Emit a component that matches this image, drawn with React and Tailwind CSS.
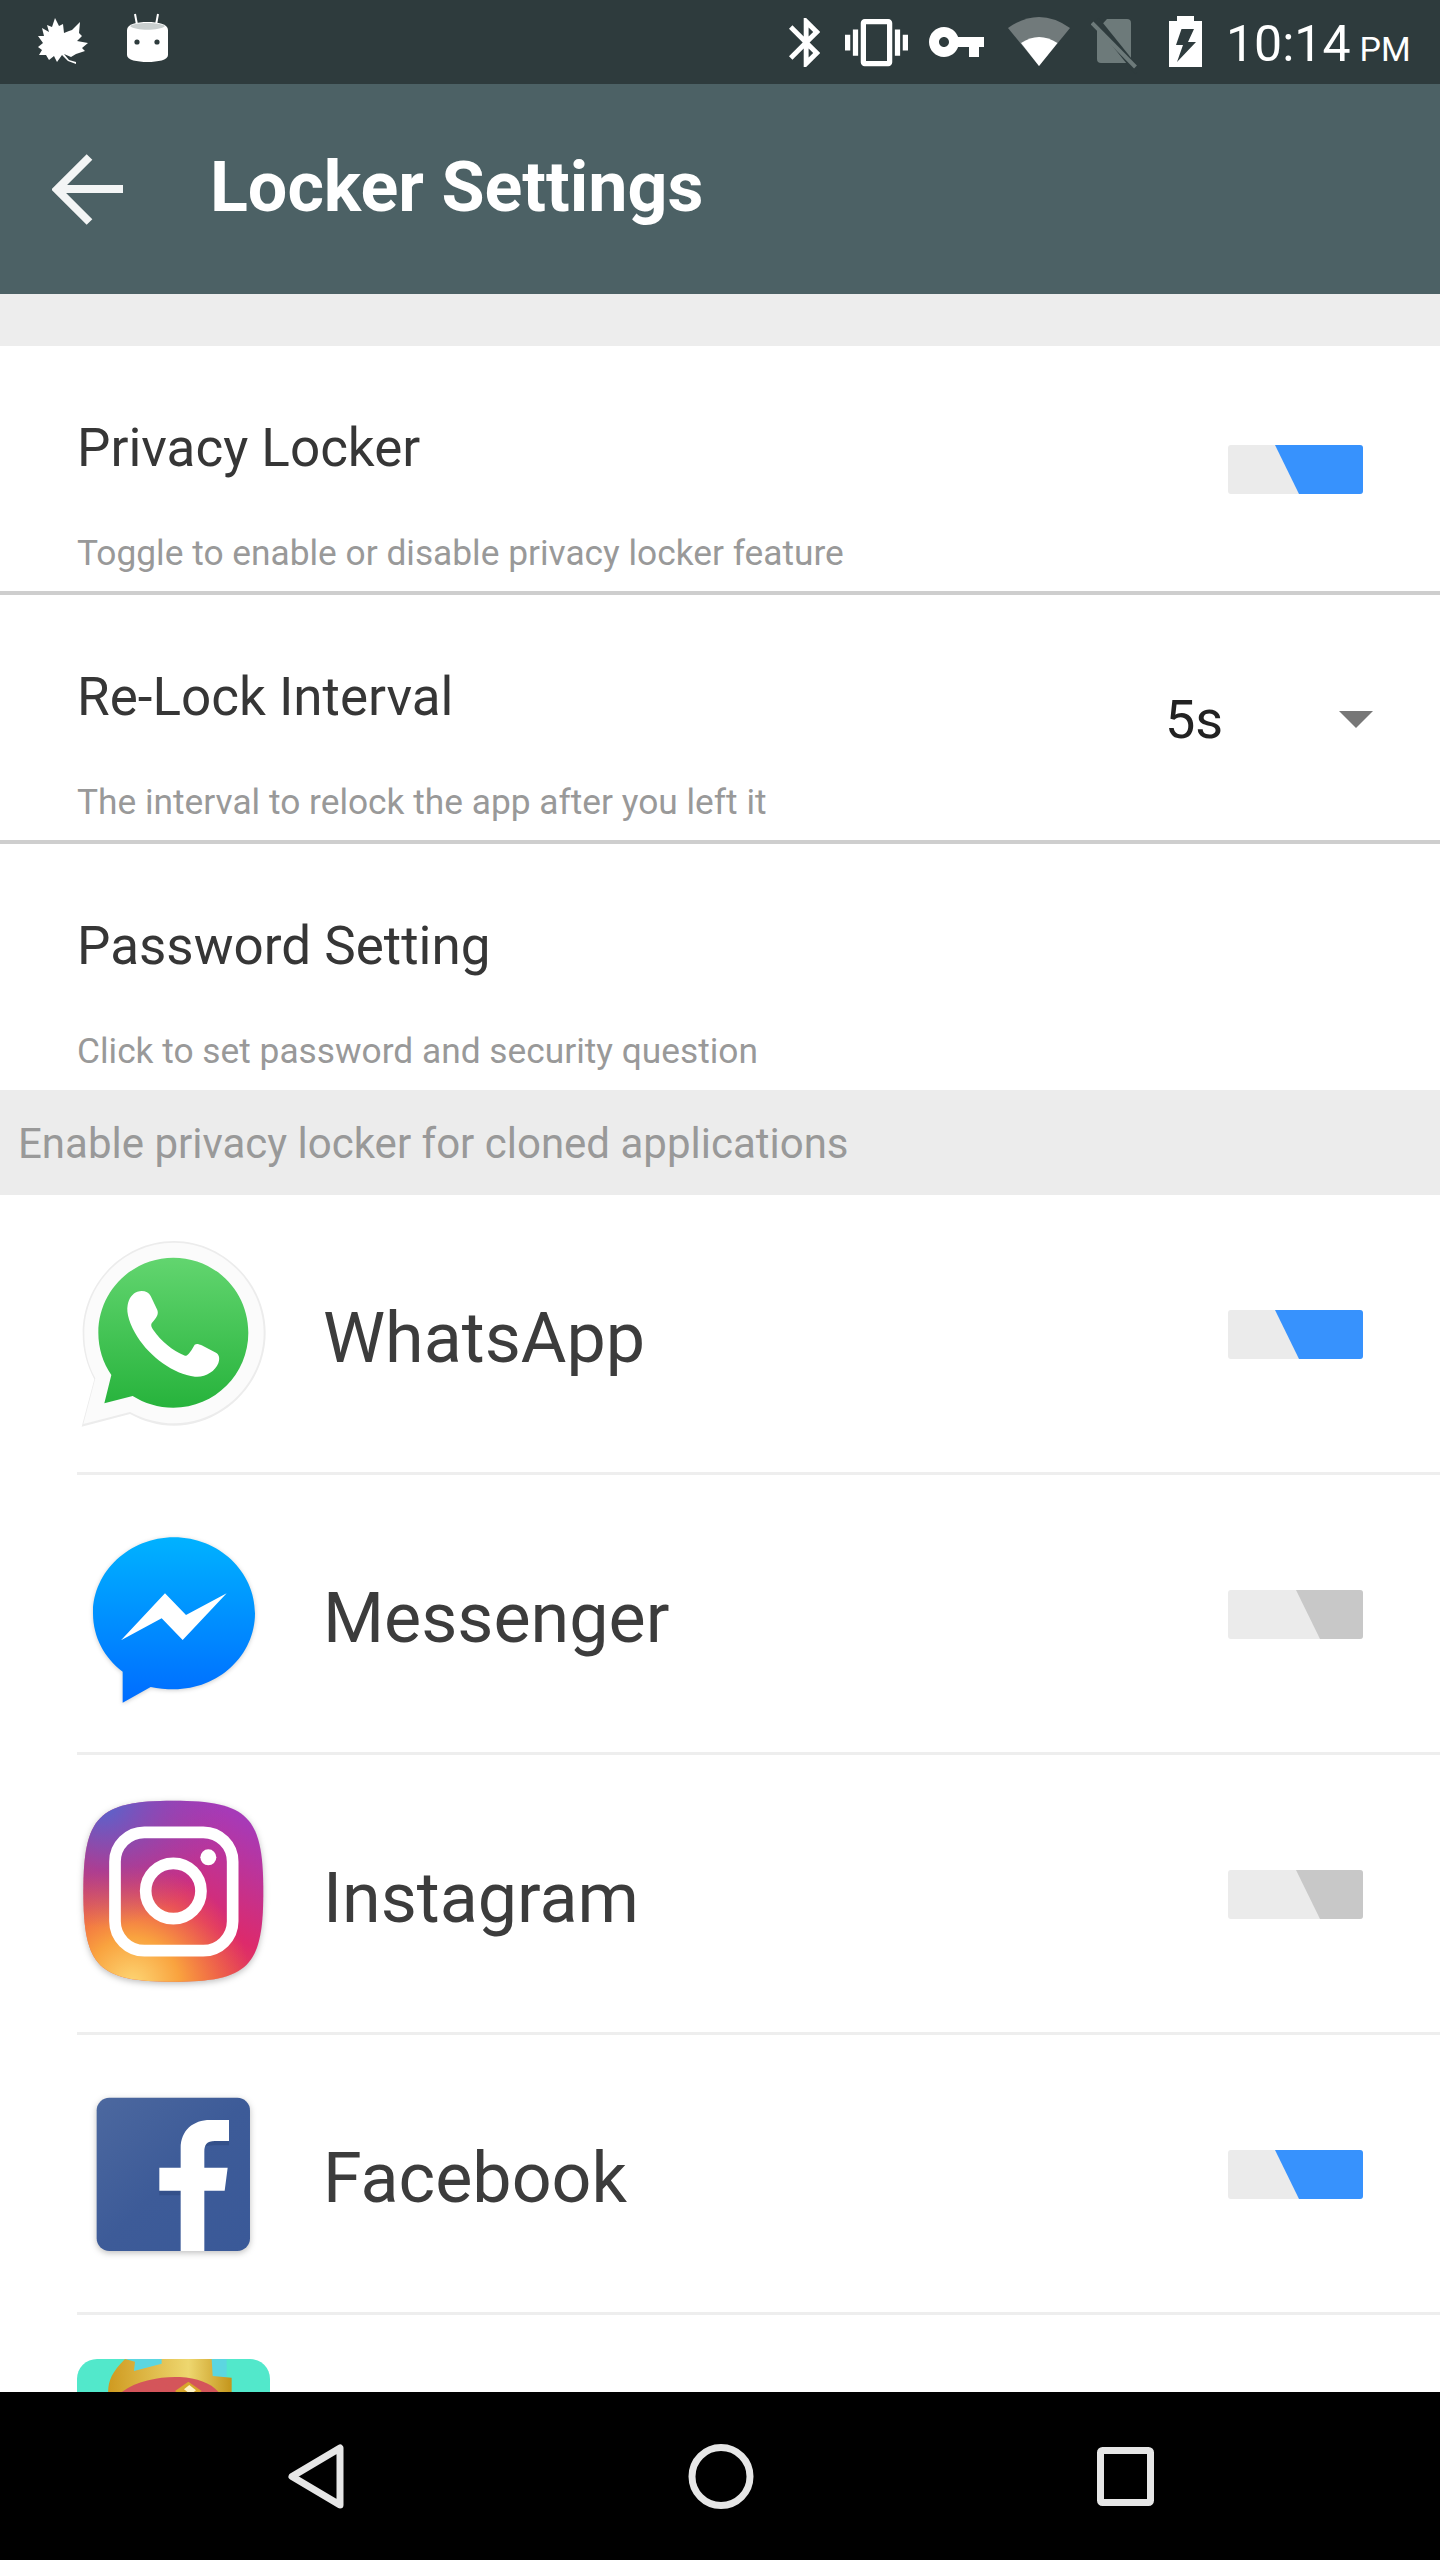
const font = { fontFamily: 'Roboto, sans-serif' };

function Toggle({ on }) {
  return (
    <div className="relative w-[135px] h-[49px] bg-[#ebebeb] rounded-[3px] overflow-hidden shrink-0">
      {on ? (
        <div className="absolute inset-0 bg-[#3792fd] [clip-path:polygon(47px_0,135px_0,135px_49px,71px_49px)]" />
      ) : (
        <div className="absolute inset-0 bg-[#c8c8c8] [clip-path:polygon(68px_0,135px_0,135px_49px,92px_49px)]" />
      )}
    </div>
  );
}

function StatusBar() {
  return (
    <div className="h-[84px] bg-[#2e3b3d] flex items-center shrink-0">
      <svg className="ml-[38px]" width="50" height="84" viewBox="38 0 50 84">
        <path fill="#fff" d="M55 18 L59 26 L63 24 L64 33 L69 31 L72 30 L80 22 L79 33 L82 36 L77 41 L88 43 L82 48 L85 51 L76 54 L71 57 L64 54 L69 60 L76 62 L76 64 L68 61 L62 55 L57 62 L54 56 L49 60 L46 55 L39 55 L42 50 L38 47 L43 43 L38 36 L44 36 L42 28 L49 32 L47 25 L52 27 Z" />
      </svg>
      <svg className="ml-[39px]" width="41" height="84" viewBox="127 0 41 84">
        <path stroke="#fff" strokeWidth="2" d="M135 14 L138 30 M158 14 L155 30" />
        <path fill="#fff" d="M127 30 C127 24 137 22 147.5 22 C158 22 168 24 168 30 L168 55 C168 60 158 62 147.5 62 C137 62 127 60 127 55 Z" />
        <path fill="#c9cfcf" d="M130 26 C135 22 160 22 165 26 C160 31 135 31 130 26 Z" />
        <circle cx="137" cy="42" r="2.6" fill="#2e3b3d" />
        <circle cx="157" cy="42" r="2.6" fill="#2e3b3d" />
      </svg>
      <svg className="ml-[620px]" width="32" height="84" viewBox="788 0 32 84">
        <g transform="translate(776.75 13.1) scale(2.45)"><path fill="#fff" d="M17.71 7.71L12 2h-1v7.59L6.41 5 5 6.41 10.59 12 5 17.59 6.41 19 11 14.41V22h1l5.71-5.71-4.3-4.29 4.3-4.29zM13 5.83l1.88 1.88L13 9.59V5.83zm1.88 10.46L13 18.17v-3.76l1.88 1.88z" /></g>
      </svg>
      <svg className="ml-[25px]" width="64" height="84" viewBox="845 0 64 84">
        <g transform="translate(845 11.1) scale(2.625)"><path fill="#fff" d="M0 15h2V9H0v6zm3 2h2V7H3v10zm19-8v6h2V9h-2zm-3 8h2V7h-2v10zM16.5 3h-9C6.67 3 6 3.67 6 4.5v15c0 .83.67 1.5 1.5 1.5h9c.83 0 1.5-.67 1.5-1.5v-15c0-.83-.67-1.5-1.5-1.5zM16 19H8V5h8v14z" /></g>
      </svg>
      <svg className="ml-[20px]" width="56" height="84" viewBox="929 0 56 84">
        <g transform="translate(926.5 12) scale(2.5)"><path fill="#fff" d="M12.65 10C11.83 7.67 9.61 6 7 6c-3.31 0-6 2.69-6 6s2.69 6 6 6c2.61 0 4.83-1.67 5.65-4H17v4h4v-4h2v-4H12.65zM7 14c-1.1 0-2-.9-2-2s.9-2 2-2 2 .9 2 2-.9 2-2 2z" /></g>
      </svg>
      <svg className="ml-[23px]" width="63" height="84" viewBox="1008 0 63 84">
        <path fill="#fff" fillOpacity="0.32" d="M1039 66 L1008 28 Q1039 6 1070 28 Z" />
        <path fill="#fff" d="M1039 66 L1021 43 Q1039 31 1057.5 43 Z" />
      </svg>
      <svg className="ml-[20px]" width="47" height="84" viewBox="1091 0 47 84">
        <path fill="#6d7a7a" d="M1107 19 H1127 Q1131 19 1131 23 V63 H1101 Q1097 63 1097 59 V30 Z" />
        <path stroke="#2e3b3d" strokeWidth="7" d="M1096 20 L1138 72" />
        <path stroke="#6d7a7a" strokeWidth="4" d="M1092 23 L1135.5 67" />
      </svg>
      <svg className="ml-[31px]" width="34" height="84" viewBox="1169 0 34 84">
        <path fill="#fff" fillRule="evenodd" d="M1177 16 H1194 V21 H1202 V67 H1169 V21 H1177 Z M1181.5 29 H1194 L1188 42 H1196 L1177 62 L1183 45 H1176 Z" />
      </svg>
      <div className="ml-[23px] pt-[4px] flex items-baseline text-white" style={font}>
        <span className="text-[50px] leading-[80px]">10:14</span>
        <span className="text-[34px] ml-[9px]">PM</span>
      </div>
    </div>
  );
}

function AppBar() {
  return (
    <div className="h-[210px] bg-[#4c6165] flex items-center shrink-0">
      <svg className="ml-[52px]" width="72" height="210" viewBox="52 84 72 210">
        <path fill="none" stroke="#f3f5f5" strokeWidth="8" d="M123 189 H58 M89.5 157 L57 189.5 L89.5 222" />
      </svg>
      <span className="ml-[86px] mb-[3px] text-white text-[70px] font-bold" style={font}>Locker Settings</span>
    </div>
  );
}

function SettingRow({ title, sub, right, divider }) {
  return (
    <div className={`relative shrink-0 pl-[77px] pr-[77px] pt-[75px] ${divider ? 'h-[249px] border-b-4 border-[#cecece]' : 'h-[246px]'}`}>
      <div className="text-[53px] leading-[54px] text-[#363636]">{title}</div>
      <div className="mt-[57px] text-[35.3px] leading-[42px] text-[#999999]">{sub}</div>
      {right}
    </div>
  );
}

function WhatsAppIcon() {
  return (
    <svg width="193" height="193" viewBox="0 0 193 193">
      <defs>
        <linearGradient id="wa" x1="0" y1="0" x2="0" y2="1">
          <stop offset="0" stopColor="#62d56f" />
          <stop offset="1" stopColor="#27b33c" />
        </linearGradient>
      </defs>
      <g transform="translate(-27 -27) scale(0.33333)">
        <path fill="#ececec" d="M98 370 C98 220 220 93 372 93 C520 93 647 220 647 368 C647 520 520 647 372 647 C325 647 280 634 240 612 L95 650 L133 508 C110 465 98 420 98 370 Z" />
        <path fill="#fbfbfb" d="M103 370 C103 222 222 98 372 98 C518 98 641 222 641 368 C641 518 518 640 372 640 C325 640 280 627 240 606 L100 642 L136 505 C113 463 103 420 103 370 Z" />
        <path fill="url(#wa)" d="M145 368 C145 243 247 143 370 143 C495 143 595 243 595 368 C595 492 495 593 370 593 C325 593 283 580 248 558 L163 580 L184 495 C159 458 145 415 145 368 Z" />
        <path fill="#fff" d="M262 245 C280 240 295 245 302 258 L322 300 C326 312 322 320 305 340 C302 346 304 352 310 360 C335 395 365 420 405 437 C412 438 418 432 434 404 C440 400 446 402 455 406 L498 428 C508 434 510 445 505 460 C495 485 465 503 435 500 C370 492 300 440 262 380 C240 345 228 310 233 285 C236 265 248 250 262 245 Z" />
      </g>
    </svg>
  );
}

function MessengerIcon() {
  return (
    <svg width="193" height="193" viewBox="0 0 193 193" className="drop-shadow-[0_1px_2px_rgba(0,0,0,0.2)]">
      <defs>
        <linearGradient id="ms" x1="0" y1="0" x2="0" y2="1">
          <stop offset="0" stopColor="#00b2ff" />
          <stop offset="1" stopColor="#006cff" />
        </linearGradient>
      </defs>
      <g transform="translate(-27 -7) scale(0.33333)">
        <path fill="url(#ms)" d="M129 310 C129 185 238 82 372 82 C506 82 615 185 615 310 C615 436 506 538 372 538 C348 538 324 536 302 531 L218 578 L218 485 C163 444 129 381 129 310 Z" />
        <path fill="#fff" d="M213 391 L345 250 L408 315 L530 250 L398 390 L335 325 Z" />
      </g>
    </svg>
  );
}

function InstagramIcon() {
  const squircle = 'M100 335 C100 110 145 62 370 62 C595 62 640 110 640 335 C640 560 595 605 370 605 C145 605 100 560 100 335 Z';
  return (
    <svg width="193" height="193" viewBox="0 0 193 193" className="drop-shadow-[0_2px_3px_rgba(0,0,0,0.25)]">
      <defs>
        <linearGradient id="ig1" x1="0.2" y1="1" x2="0.7" y2="0">
          <stop offset="0" stopColor="#f06a34" />
          <stop offset="0.45" stopColor="#dd2a6b" />
          <stop offset="1" stopColor="#a63ab8" />
        </linearGradient>
        <radialGradient id="ig2" cx="0.27" cy="1.02" r="0.66">
          <stop offset="0" stopColor="#fdd876" />
          <stop offset="0.4" stopColor="#f9a33f" />
          <stop offset="1" stopColor="#f9763a" stopOpacity="0" />
        </radialGradient>
        <radialGradient id="ig3" cx="0.1" cy="0" r="0.7">
          <stop offset="0" stopColor="#4f69d0" />
          <stop offset="1" stopColor="#8a45b8" stopOpacity="0" />
        </radialGradient>
      </defs>
      <g transform="translate(-27 -17) scale(0.33333)">
        <path fill="url(#ig1)" d={squircle} />
        <path fill="url(#ig2)" d={squircle} />
        <path fill="url(#ig3)" d={squircle} />
        <rect x="195" y="157" width="353" height="355" rx="88" fill="none" stroke="#fff" strokeWidth="35" />
        <circle cx="370" cy="333" r="83" fill="none" stroke="#fff" strokeWidth="35" />
        <circle cx="475" cy="232" r="24" fill="#fff" />
      </g>
    </svg>
  );
}

function FacebookIcon() {
  return (
    <svg width="193" height="193" viewBox="0 0 193 193" className="drop-shadow-[0_2px_3px_rgba(0,0,0,0.25)]">
      <defs>
        <linearGradient id="fb" x1="0" y1="0" x2="1" y2="1">
          <stop offset="0" stopColor="#4c689f" />
          <stop offset="0.5" stopColor="#3d5b98" />
          <stop offset="1" stopColor="#3a5998" />
        </linearGradient>
      </defs>
      <g transform="translate(-27 -7) scale(0.33333)">
        <rect x="140" y="83" width="460" height="460" rx="38" fill="url(#fb)" />
        <path fill="#34508a" d="M328 362 V376 H392 V362 Z M463 213 V232 C470 226 480 226 537 226 V213 Z" />
        <path fill="#fff" d="M392 543 V362 H328 V293 H392 V235 C392 180 430 150 480 150 H537 V213 H495 C470 213 463 225 463 245 V293 H533 L524 362 H463 V543 Z" />
      </g>
    </svg>
  );
}

function CrownIcon() {
  return (
    <svg width="193" height="193" viewBox="0 0 193 193">
      <defs>
        <linearGradient id="cg" x1="0" y1="0" x2="1" y2="0">
          <stop offset="0" stopColor="#cf9a20" />
          <stop offset="0.65" stopColor="#eed76f" />
          <stop offset="1" stopColor="#c4951b" />
        </linearGradient>
      </defs>
      <rect x="0" y="0" width="193" height="193" rx="20" fill="#52e8cb" />
      <g transform="translate(-17 -18) scale(0.33333)">
        <path fill="#5cd6e0" d="M200 54 H500 V110 H200 Z" />
        <path fill="url(#cg)" d="M145 170 C142 125 150 100 195 54 L225 62 L222 90 L305 68 V54 H455 L458 105 L515 110 V170 H490 L165 170 Z" />
        <path fill="#d4555a" d="M168 170 C210 120 300 105 360 108 C420 112 465 130 488 170 Z" />
        <path fill="#d8a62c" d="M345 150 L385 122 L425 150 L385 178 Z" />
        <path fill="#fff4c4" d="M372 145 L388 132 L408 148 L392 160 Z" />
      </g>
    </svg>
  );
}

function AppRow({ icon, name, on, clipped }) {
  return (
    <div className={`ml-[77px] shrink-0 h-[280px] flex items-center ${clipped ? '' : 'border-b-[3px] border-[#eeeeee]'}`}>
      <div className="w-[193px] h-[193px] shrink-0">{icon}</div>
      <div className="ml-[53px] mt-[10px] flex-1 text-[70px] text-[#3c3c3c]">{name}</div>
      <div className="mr-[77px] mt-[2px]"><Toggle on={on} /></div>
    </div>
  );
}

function NavBar() {
  return (
    <div className="h-[168px] bg-black shrink-0">
      <svg width="1440" height="168" viewBox="0 2392 1440 168">
        <path fill="none" stroke="#e6e6e6" strokeWidth="7" strokeLinejoin="round" d="M340 2448 V2505 L292 2476.5 Z" />
        <circle cx="721" cy="2476.5" r="29" fill="none" stroke="#e6e6e6" strokeWidth="7" />
        <rect x="1100.5" y="2450.5" width="50" height="52" rx="2" fill="none" stroke="#e6e6e6" strokeWidth="7" />
      </svg>
    </div>
  );
}

export default function App() {
  return (
    <div className="w-[1440px] h-[2560px] flex flex-col overflow-hidden bg-white" style={font}>
      <StatusBar />
      <AppBar />
      <div className="flex-1 overflow-hidden flex flex-col min-h-0">
        <div className="h-[52px] bg-[#ededed] shrink-0" />
        <SettingRow
          divider
          title="Privacy Locker"
          sub="Toggle to enable or disable privacy locker feature"
          right={<div className="absolute right-[77px] top-[99px]"><Toggle on /></div>}
        />
        <SettingRow
          divider
          title="Re-Lock Interval"
          sub="The interval to relock the app after you left it"
          right={
            <div className="absolute left-[1165px] top-[93px] flex items-center">
              <span className="text-[54px] leading-[64px] text-[#222222]">5s</span>
              <svg className="ml-[116px]" width="34" height="18" viewBox="0 0 34 18"><path d="M0 0 H34 L17 17 Z" fill="#777777" /></svg>
            </div>
          }
        />
        <SettingRow
          title="Password Setting"
          sub="Click to set password and security question"
        />
        <div className="h-[105px] bg-[#ececec] shrink-0 flex items-center pl-[18px] pt-[2px] text-[42px] text-[#999999]">
          Enable privacy locker for cloned applications
        </div>
        <AppRow icon={<WhatsAppIcon />} name="WhatsApp" on />
        <AppRow icon={<MessengerIcon />} name="Messenger" />
        <AppRow icon={<InstagramIcon />} name="Instagram" />
        <AppRow icon={<FacebookIcon />} name="Facebook" on />
        <AppRow icon={<CrownIcon />} name="" clipped />
      </div>
      <NavBar />
    </div>
  );
}
